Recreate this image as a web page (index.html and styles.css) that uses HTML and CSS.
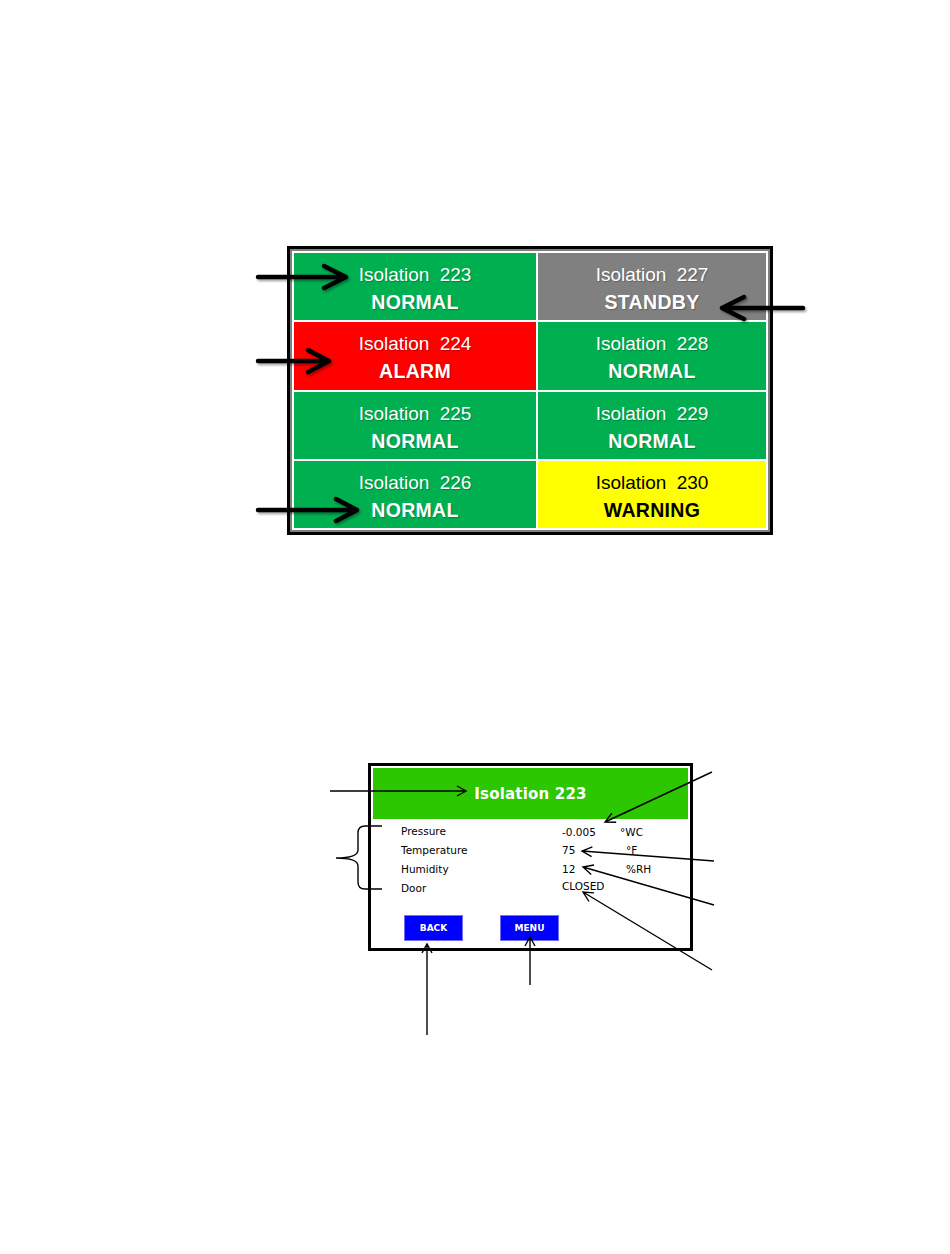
FILE: index.html
```html
<!DOCTYPE html>
<html lang="en">
<head>
    <meta charset="UTF-8">
    <title>Isolation Room Monitor</title>
    <link rel="stylesheet" href="styles.css">
</head>
<body>

<div class="page">

    <section class="board">
        <div class="cell normal"><span class="name">Isolation 223</span><span class="state">NORMAL</span></div>
        <div class="cell standby"><span class="name">Isolation 227</span><span class="state">STANDBY</span></div>
        <div class="cell alarm"><span class="name">Isolation 224</span><span class="state">ALARM</span></div>
        <div class="cell normal"><span class="name">Isolation 228</span><span class="state">NORMAL</span></div>
        <div class="cell normal"><span class="name">Isolation 225</span><span class="state">NORMAL</span></div>
        <div class="cell normal"><span class="name">Isolation 229</span><span class="state">NORMAL</span></div>
        <div class="cell normal"><span class="name">Isolation 226</span><span class="state">NORMAL</span></div>
        <div class="cell warning"><span class="name">Isolation 230</span><span class="state">WARNING</span></div>
    </section>

    <section class="panel">
        <header class="panel-head">Isolation 223</header>
        <div class="readings">
            <span>Pressure</span><span class="low">-0.005</span><span class="low unit-wide">°WC</span>
            <span>Temperature</span><span>75</span><span>°F</span>
            <span>Humidity</span><span>12</span><span>%RH</span>
            <span>Door</span><span class="high">CLOSED</span><span></span>
        </div>
        <div class="actions">
            <button>BACK</button>
            <button>MENU</button>
        </div>
    </section>

    <!-- callout arrows drawn over the figures -->
    <svg class="callouts" width="950" height="1254" viewBox="0 0 950 1254">
        <defs>
            <filter id="soft" x="-20%" y="-50%" width="140%" height="200%">
                <feDropShadow dx="1.5" dy="2" stdDeviation="1.2" flood-color="#000" flood-opacity="0.35"/>
            </filter>
        </defs>
        <g class="thick" filter="url(#soft)">
            <path d="M258,277 L344,277 M324,266 L346,277 L324,288"/>
            <path d="M258,361 L327,361 M308,350 L329,361 L308,372"/>
            <path d="M258,510 L355,510 M336,499 L357,510 L336,521"/>
            <path d="M803,308 L724,308 M744,297 L722,308 L744,319"/>
        </g>
        <g class="thin">
            <path d="M330,791 L465,791 M457,786 L466,791 L457,796"/>
            <path d="M712,772 L605,822 M616.2,822.3 L605,822 L611.9,813.2"/>
            <path d="M714,861 L582,851 M592.4,846.8 L582,851 L591.6,856.7"/>
            <path d="M714,905 L583,867 M594,865 L583,867 L591.2,874.6"/>
            <path d="M712,970 L583,892 M594.1,892.9 L583,892 L589,901.5"/>
            <path d="M427,1035 L427,945 M422,953 L427,944 L432,953"/>
            <path d="M530,985 L530,938 M525,946 L530,937 L535,946"/>
            <path d="M382,826 L365,826 Q358,826 358,833 L358,850 Q358,858 336,858 Q358,858 358,866 L358,882 Q358,889 365,889 L382,889"/>
        </g>
    </svg>

</div>

</body>
</html>
```

FILE: styles.css
```css
body {
    margin: 0;
    background: #fff;
    font-family: "Liberation Sans", Arial, sans-serif;
}
.page {
    position: relative;
    width: 950px;
    height: 1254px;
    box-sizing: border-box;
    padding-top: 246px;
    overflow: hidden;
}

/* status board */
.board {
    margin-left: 287px;
    width: 486px;
    height: 289px;
    box-sizing: border-box;
    border: 3px solid #000;
    padding: 4px;
    box-shadow: inset 0 0 0 2px #7f7f7f;
    background: #fff;
    display: grid;
    grid-template-columns: 242px 228px;
    grid-template-rows: repeat(4, 1fr);
    gap: 2px;
}
.cell {
    display: flex;
    flex-direction: column;
    align-items: center;
    justify-content: center;
    gap: 5px;
    padding-top: 5px;
    color: #fff;
    text-shadow: 1px 1px 1px rgba(0,0,0,0.25);
}
.cell .name {
    font-size: 19px;
    line-height: 22px;
    word-spacing: 5px;
}
.cell .state {
    font-size: 19.5px;
    line-height: 23px;
    font-weight: bold;
    letter-spacing: 0.3px;
}
.normal { background: #00b050; }
.standby { background: #808080; }
.alarm { background: #ff0000; }
.warning {
    background: #ffff00;
    color: #000;
    text-shadow: none;
}

/* detail panel */
.panel {
    margin: 228px 0 0 368px;
    width: 325px;
    box-sizing: border-box;
    border: 3px solid #000;
    padding: 2px;
    font-family: "DejaVu Sans", sans-serif;
}
.panel-head {
    height: 51px;
    background: #2cc700;
    color: #fff;
    font-size: 15px;
    font-weight: bold;
    letter-spacing: 0.2px;
    display: flex;
    align-items: center;
    justify-content: center;
}
.readings {
    margin-top: 2px;
    padding-left: 28px;
    display: grid;
    grid-template-columns: 161px 64px auto;
    grid-auto-rows: 19px;
    align-items: center;
    font-size: 10.5px;
    color: #000;
}
.readings .low { padding-top: 3px; }
.readings .high { margin-top: -4px; }
.readings .unit-wide { margin-left: -6px; }
.actions {
    display: flex;
    gap: 37px;
    padding-left: 31px;
    margin-top: 18px;
    padding-bottom: 5px;
}
.actions button {
    width: 59px;
    height: 26px;
    padding: 0;
    background: #0000ff;
    border: 1px solid #7070ff;
    color: #fff;
    font-family: "DejaVu Sans", sans-serif;
    font-size: 9px;
    font-weight: bold;
}

/* callouts */
.callouts {
    position: absolute;
    top: 0;
    left: 0;
    pointer-events: none;
}
.callouts path {
    fill: none;
    stroke: #000;
}
.thick path {
    stroke-width: 4.5;
    stroke-linecap: round;
    stroke-linejoin: round;
}
.thin path {
    stroke-width: 1.4;
}
```
